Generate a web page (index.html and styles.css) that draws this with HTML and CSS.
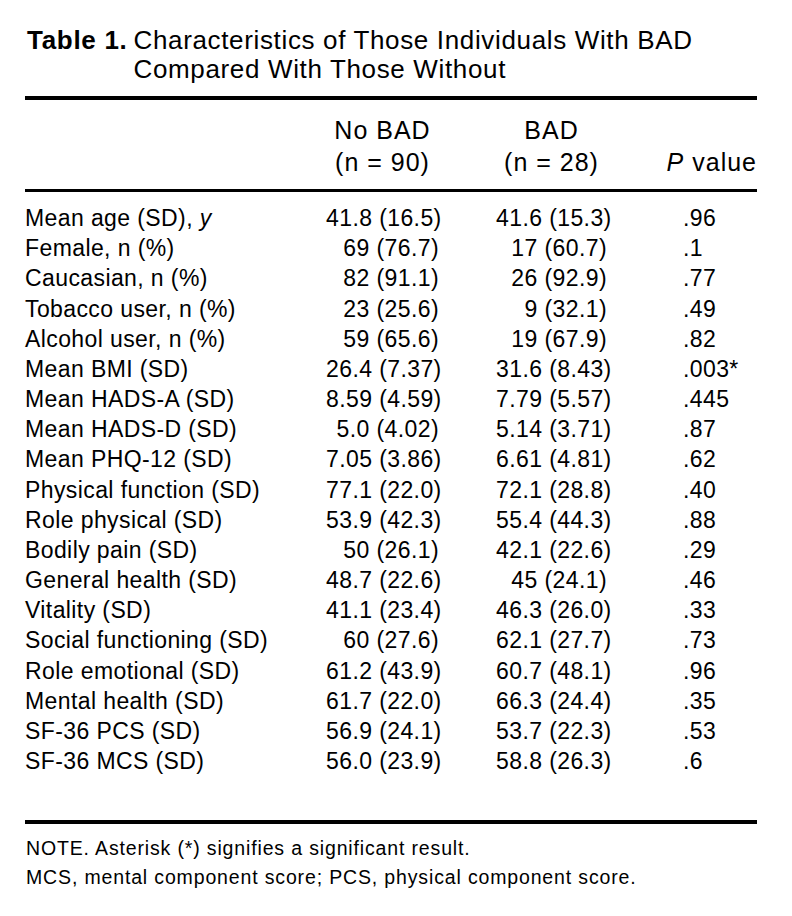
FILE: index.html
```html
<!DOCTYPE html>
<html lang="en">
<head>
<meta charset="utf-8">
<title>Table 1</title>
<link rel="stylesheet" href="styles.css">
</head>
<body>
<div class="page">
  <div class="caption">
    <span class="cap-label">Table 1.</span>
    <span class="cap-title">Characteristics of Those Individuals With BAD<br>Compared With Those Without</span>
  </div>
  <table class="data">
    <colgroup>
      <col class="c-label"><col class="c-no"><col class="c-bad"><col class="c-p">
    </colgroup>
    <thead>
      <tr>
        <th class="h-label"></th>
        <th class="h-no">No BAD<br>(n = 90)</th>
        <th class="h-bad">BAD<br>(n = 28)</th>
        <th class="h-p"><i>P</i> value</th>
      </tr>
    </thead>
    <tbody>
      <tr><td>Mean age (SD), <i>y</i></td><td class="v">41.8 (16.5)</td><td class="v vb">41.6 (15.3)</td><td class="p">.96</td></tr>
      <tr><td>Female, n (%)</td><td class="v">69 (76.7)</td><td class="v vb">17 (60.7)</td><td class="p">.1</td></tr>
      <tr><td>Caucasian, n (%)</td><td class="v">82 (91.1)</td><td class="v vb">26 (92.9)</td><td class="p">.77</td></tr>
      <tr><td>Tobacco user, n (%)</td><td class="v">23 (25.6)</td><td class="v vb">9 (32.1)</td><td class="p">.49</td></tr>
      <tr><td>Alcohol user, n (%)</td><td class="v">59 (65.6)</td><td class="v vb">19 (67.9)</td><td class="p">.82</td></tr>
      <tr><td>Mean BMI (SD)</td><td class="v">26.4 (7.37)</td><td class="v vb">31.6 (8.43)</td><td class="p">.003*</td></tr>
      <tr><td>Mean HADS-A (SD)</td><td class="v">8.59 (4.59)</td><td class="v vb">7.79 (5.57)</td><td class="p">.445</td></tr>
      <tr><td>Mean HADS-D (SD)</td><td class="v">5.0 (4.02)</td><td class="v vb">5.14 (3.71)</td><td class="p">.87</td></tr>
      <tr><td>Mean PHQ-12 (SD)</td><td class="v">7.05 (3.86)</td><td class="v vb">6.61 (4.81)</td><td class="p">.62</td></tr>
      <tr><td>Physical function (SD)</td><td class="v">77.1 (22.0)</td><td class="v vb">72.1 (28.8)</td><td class="p">.40</td></tr>
      <tr><td>Role physical (SD)</td><td class="v">53.9 (42.3)</td><td class="v vb">55.4 (44.3)</td><td class="p">.88</td></tr>
      <tr><td>Bodily pain (SD)</td><td class="v">50 (26.1)</td><td class="v vb">42.1 (22.6)</td><td class="p">.29</td></tr>
      <tr><td>General health (SD)</td><td class="v">48.7 (22.6)</td><td class="v vb">45 (24.1)</td><td class="p">.46</td></tr>
      <tr><td>Vitality (SD)</td><td class="v">41.1 (23.4)</td><td class="v vb">46.3 (26.0)</td><td class="p">.33</td></tr>
      <tr><td>Social functioning (SD)</td><td class="v">60 (27.6)</td><td class="v vb">62.1 (27.7)</td><td class="p">.73</td></tr>
      <tr><td>Role emotional (SD)</td><td class="v">61.2 (43.9)</td><td class="v vb">60.7 (48.1)</td><td class="p">.96</td></tr>
      <tr><td>Mental health (SD)</td><td class="v">61.7 (22.0)</td><td class="v vb">66.3 (24.4)</td><td class="p">.35</td></tr>
      <tr><td>SF-36 PCS (SD)</td><td class="v">56.9 (24.1)</td><td class="v vb">53.7 (22.3)</td><td class="p">.53</td></tr>
      <tr><td>SF-36 MCS (SD)</td><td class="v">56.0 (23.9)</td><td class="v vb">58.8 (26.3)</td><td class="p">.6</td></tr>
    </tbody>
  </table>
  <div class="notes">
    <p>NOTE. Asterisk (*) signifies a significant result.</p>
    <p>MCS, mental component score; PCS, physical component score.</p>
  </div>
</div>
</body>
</html>
```
FILE: styles.css
```css
html, body {
  margin: 0;
  padding: 0;
  background: #fff;
  color: #000;
  font-family: "Liberation Sans", Arial, Helvetica, sans-serif;
}

.page {
  width: 732px;
  margin-left: 25px;
  padding-top: 26px;
}

.caption {
  display: flex;
  gap: 6px;
  padding-left: 2px;
  font-size: 26px;
  line-height: 29px;
  letter-spacing: 0.65px;
  margin-bottom: 12px;
}

.cap-label {
  font-weight: bold;
  letter-spacing: 0.7px;
  white-space: nowrap;
}

.data {
  width: 732px;
  table-layout: fixed;
  border-collapse: separate;
  border-spacing: 0;
}

.c-label { width: 301px; }
.c-no { width: 113px; }
.c-bad { width: 168px; }
.c-p { width: 150px; }

.data th {
  font-weight: normal;
  font-size: 25px;
  line-height: 32px;
  letter-spacing: 1px;
  border-top: 4px solid #000;
  border-bottom: 3px solid #000;
  padding: 14px 0 11px 0;
  vertical-align: bottom;
  white-space: nowrap;
}

.data th.h-no { text-align: center; }
.data th.h-bad { text-align: center; padding-left: 57px; }
.data th.h-p { text-align: right; }

.data td {
  font-size: 23px;
  line-height: 30.17px;
  letter-spacing: 0.4px;
  padding: 0;
  white-space: nowrap;
}

.data tbody tr:first-child td { padding-top: 11px; }

.data td.v { text-align: right; }
.data td.vb { padding-left: 57px; }
.data td.p { padding-left: 76px; }

.notes {
  margin-top: 44px;
  border-top: 4px solid #000;
  padding-top: 10px;
  padding-left: 1px;
  font-size: 19.5px;
  line-height: 29px;
  letter-spacing: 0.85px;
}

.notes p {
  margin: 0;
}
```
